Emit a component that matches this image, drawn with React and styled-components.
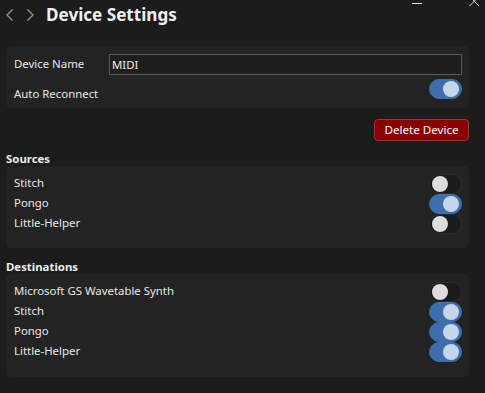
import React, { useState } from "react";
import styled, { createGlobalStyle } from "styled-components";

const GlobalStyle = createGlobalStyle`
  html, body {
    margin: 0;
    padding: 0;
    background: #1c1c1c;
    color: #e6e6e6;
    font-family: "Noto Sans", "Open Sans", sans-serif;
    font-size: 11.4px;
  }
  * { box-sizing: border-box; }
`;

const Page = styled.div`
  position: relative;
  width: 485px;
  height: 393px;
  overflow: hidden;
  background: #1c1c1c;
`;

const Header = styled.div`
  display: flex;
  align-items: center;
  height: 30px;
  padding-left: 6px;
  gap: 14px;
`;

const NavButton = styled.span`
  display: flex;
  width: 7px;
  justify-content: center;
`;

const Title = styled.h1`
  margin: 0 0 0 -2px;
  font-size: 17.1px;
  font-weight: 700;
  color: #f0f0f0;
  line-height: 24px;
`;

const WindowControls = styled.div`
  position: absolute;
  top: -4px;
  right: 5px;
  display: flex;
  align-items: center;
  gap: 46px;
`;

const Content = styled.div`
  padding: 16px 16px 0 6px;
`;

const Card = styled.div`
  background: #232323;
  border-radius: 5px;
  padding: ${(p) => p.$pad || "8px 7px 14px 8px"};
  display: flex;
  flex-direction: column;
  gap: ${(p) => p.$gap || "0px"};
`;

const Row = styled.div`
  display: flex;
  align-items: center;
  justify-content: space-between;
  height: ${(p) => p.$h || 20}px;
`;

const Label = styled.span`
  width: ${(p) => (p.$w ? p.$w + "px" : "auto")};
  flex-shrink: 0;
  color: #e8e8e8;
  padding-top: ${(p) => p.$down || 0}px;
  padding-bottom: 3px;
`;

const TextInput = styled.input`
  flex: 1;
  height: 21px;
  background: #1e1e1e;
  border: 1px solid #5a5a5a;
  color: #f0f0f0;
  font-family: inherit;
  font-size: 11.4px;
  padding: 0 2px 1px;
  outline: none;
`;

const ActionBar = styled.div`
  display: flex;
  justify-content: flex-end;
  margin-top: 11px;
`;

const DangerButton = styled.button`
  height: 22px;
  width: 95px;
  background: #8b0000;
  border: 1px solid #a83232;
  border-radius: 4px;
  color: #ffffff;
  font-family: inherit;
  font-size: 11.6px;
  padding: 0 0 1px;
`;

const SectionTitle = styled.div`
  margin-top: ${(p) => p.$mt || 11}px;
  line-height: 14px;
  font-weight: 700;
  color: #eeeeee;
`;

const Track = styled.span`
  display: inline-flex;
  flex-shrink: 0;
  align-items: center;
  justify-content: ${(p) => (p.$on ? "flex-end" : "flex-start")};
  width: 33px;
  height: 20px;
  border-radius: 10px;
  padding: 0 2px;
  background: ${(p) => (p.$on ? "#3d6fac" : "#1b1b1b")};
  border: 1px solid ${(p) => (p.$on ? "#3d6fac" : "#2c2c2c")};
  cursor: pointer;
`;

const Knob = styled.span`
  width: 16px;
  height: 16px;
  border-radius: 50%;
  background: ${(p) => (p.$on ? "#c5d5ea" : "#dcdcdc")};
`;

function Toggle({ initial }) {
  const [on, setOn] = useState(initial);
  return (
    <Track $on={on} onClick={() => setOn(!on)}>
      <Knob $on={on} />
    </Track>
  );
}

const sources = [
  { name: "Stitch", on: false },
  { name: "Pongo", on: true },
  { name: "Little-Helper", on: false },
];

const destinations = [
  { name: "Microsoft GS Wavetable Synth", on: false },
  { name: "Stitch", on: true },
  { name: "Pongo", on: true },
  { name: "Little-Helper", on: true },
];

export default function App() {
  return (
    <Page>
      <GlobalStyle />
      <Header>
        <NavButton>
          <svg width="7" height="12" viewBox="0 0 7 12">
            <path d="M6.5 0.5 L1 6 L6.5 11.5" fill="none" stroke="#9a9a9a" strokeWidth="1.2" />
          </svg>
        </NavButton>
        <NavButton>
          <svg width="7" height="12" viewBox="0 0 7 12">
            <path d="M0.5 0.5 L6 6 L0.5 11.5" fill="none" stroke="#9a9a9a" strokeWidth="1.2" />
          </svg>
        </NavButton>
        <Title>Device Settings</Title>
      </Header>
      <WindowControls>
        <svg width="11" height="12" viewBox="0 0 11 12">
          <path d="M0 7.5 H10" stroke="#e0e0e0" strokeWidth="1" />
        </svg>
        <svg width="11" height="12" viewBox="0 0 11 12">
          <path d="M0.5 0.5 L10 10 M10 0.5 L0.5 10" stroke="#d8d8d8" strokeWidth="1" />
        </svg>
      </WindowControls>
      <Content>
        <Card $pad="8px 7px 9px 8px" $gap="4px">
          <Row $h={21}>
            <Label $w={95}>Device Name</Label>
            <TextInput defaultValue="MIDI" />
          </Row>
          <Row>
            <Label $down={11}>Auto Reconnect</Label>
            <Toggle initial={true} />
          </Row>
        </Card>
        <ActionBar>
          <DangerButton>Delete Device</DangerButton>
        </ActionBar>
        <SectionTitle>Sources</SectionTitle>
        <Card>
          {sources.map((s) => (
            <Row key={s.name}>
              <Label>{s.name}</Label>
              <Toggle initial={s.on} />
            </Row>
          ))}
        </Card>
        <SectionTitle $mt={12}>Destinations</SectionTitle>
        <Card $pad="8px 7px 15px 8px">
          {destinations.map((s) => (
            <Row key={s.name}>
              <Label>{s.name}</Label>
              <Toggle initial={s.on} />
            </Row>
          ))}
        </Card>
      </Content>
    </Page>
  );
}
